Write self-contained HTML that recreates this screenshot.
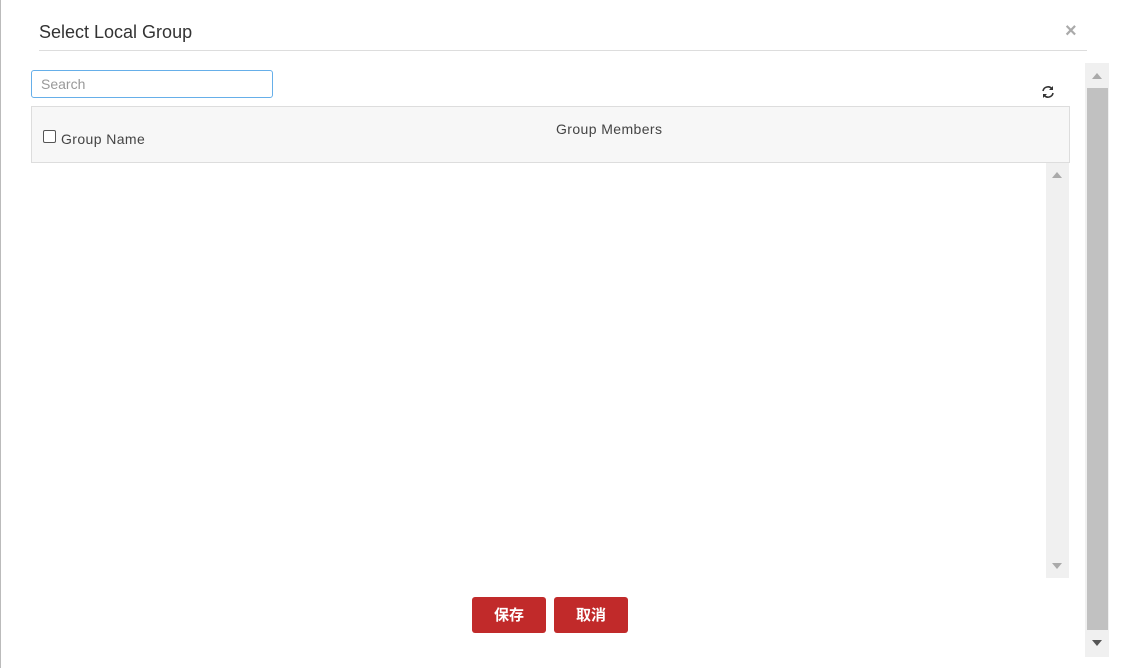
<!DOCTYPE html>
<html><head><meta charset="utf-8"><style>
body{margin:0;width:1122px;height:668px;background:#fff;position:relative;overflow:hidden;font-family:"Liberation Sans","Noto Sans CJK SC",sans-serif;}
.a{position:absolute}
</style></head><body>
<div class="a" style="left:0;top:0;width:1px;height:668px;background:#bbb"></div>
<div class="a" style="left:39px;top:22px;font-size:18px;color:#333">Select Local Group</div>
<div class="a" style="left:1065px;top:20px;font-size:20px;color:#aaa;font-weight:bold">×</div>
<div class="a" style="left:39px;top:50px;width:1048px;height:1px;background:#ddd"></div>
<div class="a" style="left:31px;top:70px;width:240px;height:26px;border:1px solid #66afe9;border-radius:3px"></div>
<div class="a" style="left:41px;top:76px;font-size:14px;color:#999">Search</div>
<svg class="a" style="left:1041px;top:85px" width="14" height="14" viewBox="0 0 14 14"><path d="M2 6A5 5 0 0 1 11 4M12 8A5 5 0 0 1 3 10" stroke="#333" stroke-width="1.6" fill="none"/><path d="M12 1V5H8Z M2 13V9H6Z" fill="#333"/></svg>
<div class="a" style="left:31px;top:106px;width:1037px;height:55px;background:#f7f7f7;border:1px solid #ddd"></div>
<div class="a" style="left:43px;top:130px;width:11px;height:11px;border:1px solid #555;border-radius:2px;background:#fff"></div>
<div class="a" style="left:61px;top:131px;font-size:14px;color:#444;letter-spacing:0.4px">Group Name</div>
<div class="a" style="left:556px;top:121px;font-size:14px;color:#444;letter-spacing:0.4px">Group Members</div>
<div class="a" style="left:1046px;top:163px;width:23px;height:415px;background:#f0f0f0"></div>
<div class="a" style="left:1052px;top:172px;border:5px solid transparent;border-bottom:6px solid #aaa;border-top:0"></div>
<div class="a" style="left:1052px;top:563px;border:5px solid transparent;border-top:6px solid #aaa;border-bottom:0"></div>
<div class="a" style="left:1085px;top:63px;width:24px;height:594px;background:#f0f0f0"></div>
<div class="a" style="left:1087px;top:88px;width:21px;height:542px;background:#c1c1c1"></div>
<div class="a" style="left:1092px;top:73px;border:5px solid transparent;border-bottom:6px solid #aaa;border-top:0"></div>
<div class="a" style="left:1092px;top:640px;border:5px solid transparent;border-top:6px solid #555;border-bottom:0"></div>
<div class="a" style="left:472px;top:597px;width:74px;height:36px;background:#c12a2a;border-radius:3px;color:#fff;font-size:15px;font-weight:bold;text-align:center;line-height:37px">保存</div>
<div class="a" style="left:554px;top:597px;width:74px;height:36px;background:#c12a2a;border-radius:3px;color:#fff;font-size:15px;font-weight:bold;text-align:center;line-height:37px">取消</div>
</body></html>
